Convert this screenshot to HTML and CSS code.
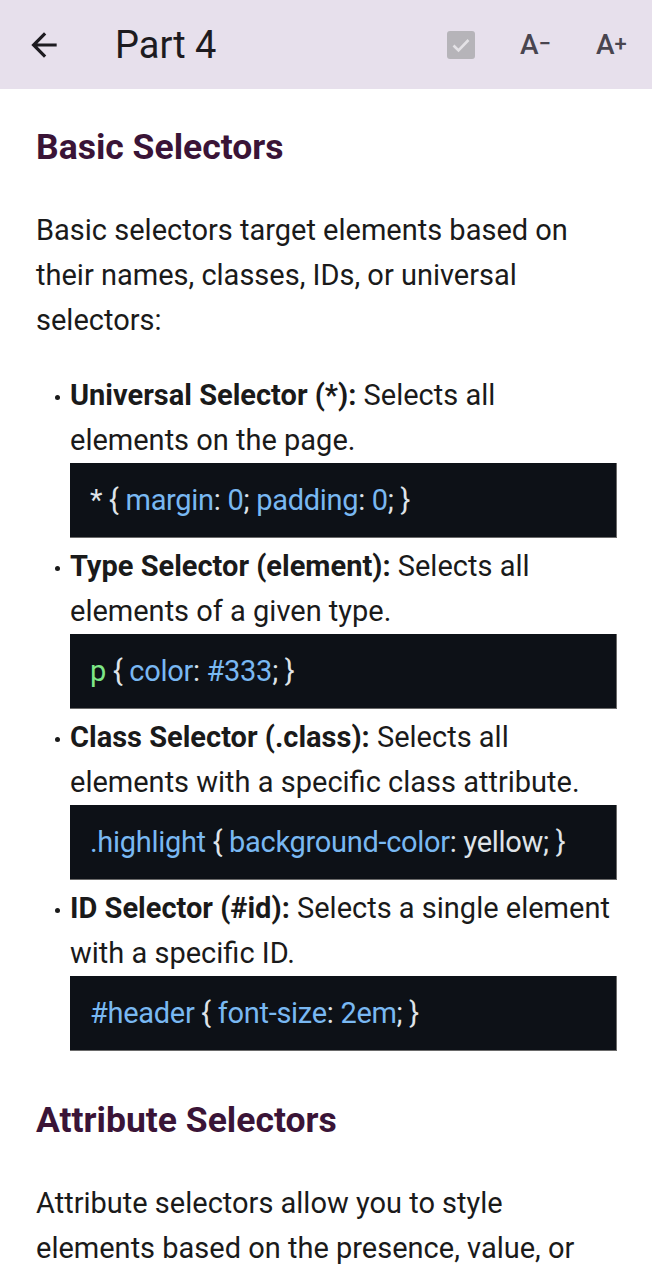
FILE: index.html
```html
<!DOCTYPE html>
<html lang="en">
<head>
<meta charset="utf-8">
<title>Part 4</title>
<link rel="stylesheet" href="styles.css">
</head>
<body>
<header class="appbar">
  <button class="icon-btn back" aria-label="Back">
    <svg width="38" height="38" viewBox="0 0 24 24"><path d="M20 11H7.83l5.59-5.59L12 4l-8 8 8 8 1.41-1.41L7.83 13H20v-2z" fill="#1d1b20"/></svg>
  </button>
  <h1 class="title">Part 4</h1>
  <div class="actions">
    <span class="check">
      <svg width="28" height="28" viewBox="0 0 28 28"><rect x="0" y="0" width="28" height="28" rx="3" fill="#b6b4b9"/><path d="M6.5 14.5l5 5 10-10.5" fill="none" stroke="#e4e2e6" stroke-width="2.6"/></svg>
    </span>
    <span class="font-btn">A<span class="sign">−</span></span>
    <span class="font-btn">A<span class="sign">+</span></span>
  </div>
</header>
<main class="content">
  <h2>Basic Selectors</h2>
  <p>Basic selectors target elements based on their names, classes, IDs, or universal selectors:</p>
  <ul class="items">
    <li>
      <div class="desc"><b>Universal Selector (*):</b> Selects all elements on the page.</div>
      <pre class="code"><span class="p">* { </span><span class="k">margin</span><span class="p">: </span><span class="k">0</span><span class="p">; </span><span class="k">padding</span><span class="p">: </span><span class="k">0</span><span class="p">; }</span></pre>
    </li>
    <li>
      <div class="desc"><b>Type Selector (element):</b> Selects all elements of a given type.</div>
      <pre class="code"><span class="g">p</span><span class="p"> { </span><span class="k">color</span><span class="p">: </span><span class="k">#333</span><span class="p">; }</span></pre>
    </li>
    <li>
      <div class="desc"><b>Class Selector (.class):</b> Selects all elements with a specific class attribute.</div>
      <pre class="code"><span class="k">.highlight</span><span class="p"> { </span><span class="k">background-color</span><span class="p">: yellow; }</span></pre>
    </li>
    <li>
      <div class="desc"><b>ID Selector (#id):</b> Selects a single element with a specific ID.</div>
      <pre class="code"><span class="k">#header</span><span class="p"> { </span><span class="k">font-size</span><span class="p">: </span><span class="k">2em</span><span class="p">; }</span></pre>
    </li>
  </ul>
  <h2 class="second">Attribute Selectors</h2>
  <p>Attribute selectors allow you to style elements based on the presence, value, or partial value of an attribute.</p>
</main>
</body>
</html>
```
FILE: styles.css
```css
* { box-sizing: border-box; }
html, body { margin: 0; padding: 0; }
body {
  width: 652px;
  height: 1280px;
  overflow: hidden;
  background: #ffffff;
  font-family: Roboto, "Noto Sans", sans-serif;
  color: #1a1a1a;
}
.appbar {
  height: 89px;
  background: #e7e0ec;
  display: flex;
  align-items: center;
  padding: 0 20px 0 25px;
}
.icon-btn {
  border: 0;
  background: none;
  padding: 0;
  width: 38px;
  height: 38px;
  display: flex;
}
.title {
  margin: 0 0 0 52px;
  font-size: 38px;
  font-weight: 400;
  color: #1d1b20;
  flex: 1;
}
.actions {
  display: flex;
  align-items: center;
}
.check { display: flex; width: 28px; height: 28px; margin-right: 45px; }
.font-btn {
  font-size: 28px;
  font-weight: 500;
  color: #49454f;
  width: 76px;
}
.font-btn:last-child { width: 36px; }
.font-btn .sign { font-size: 22px; position: relative; top: -3px; }
.content {
  padding: 0 35px 0 36px;
}
h2 {
  margin: 38px 0 41px;
  font-size: 35.5px;
  line-height: 40px;
  font-weight: 700;
  color: #3a1437;
}
h2.second { margin-top: 49px; margin-bottom: 41px; }
p {
  margin: 0;
  font-size: 29px;
  line-height: 45px;
  color: #1a1a1a;
}
.items {
  list-style: none;
  margin: 30px 0 0;
  padding: 0 0 0 34px;
}
.items li {
  position: relative;
  margin-bottom: 6px;
}
.items li::before {
  content: "";
  position: absolute;
  left: -15px;
  top: 22px;
  width: 5px;
  height: 5px;
  border-radius: 50%;
  background: #1a1a1a;
}
.desc {
  font-size: 29px;
  line-height: 45px;
}
.desc b { font-weight: 700; }
.code {
  margin: 0;
  height: 75px;
  background: #0d1117;
  border-right: 1px solid #6a6a6a;
  border-bottom: 1px solid #6a6a6a;
  font-family: Roboto, sans-serif;
  font-size: 29px;
  line-height: 74px;
  padding: 0 20px;
  letter-spacing: -0.3px;
  color: #dfe3e8;
  white-space: pre;
}
.code .k { color: #79b8f2; }
.code .g { color: #7ee787; }
.code .p { color: #dfe3e8; }
```
